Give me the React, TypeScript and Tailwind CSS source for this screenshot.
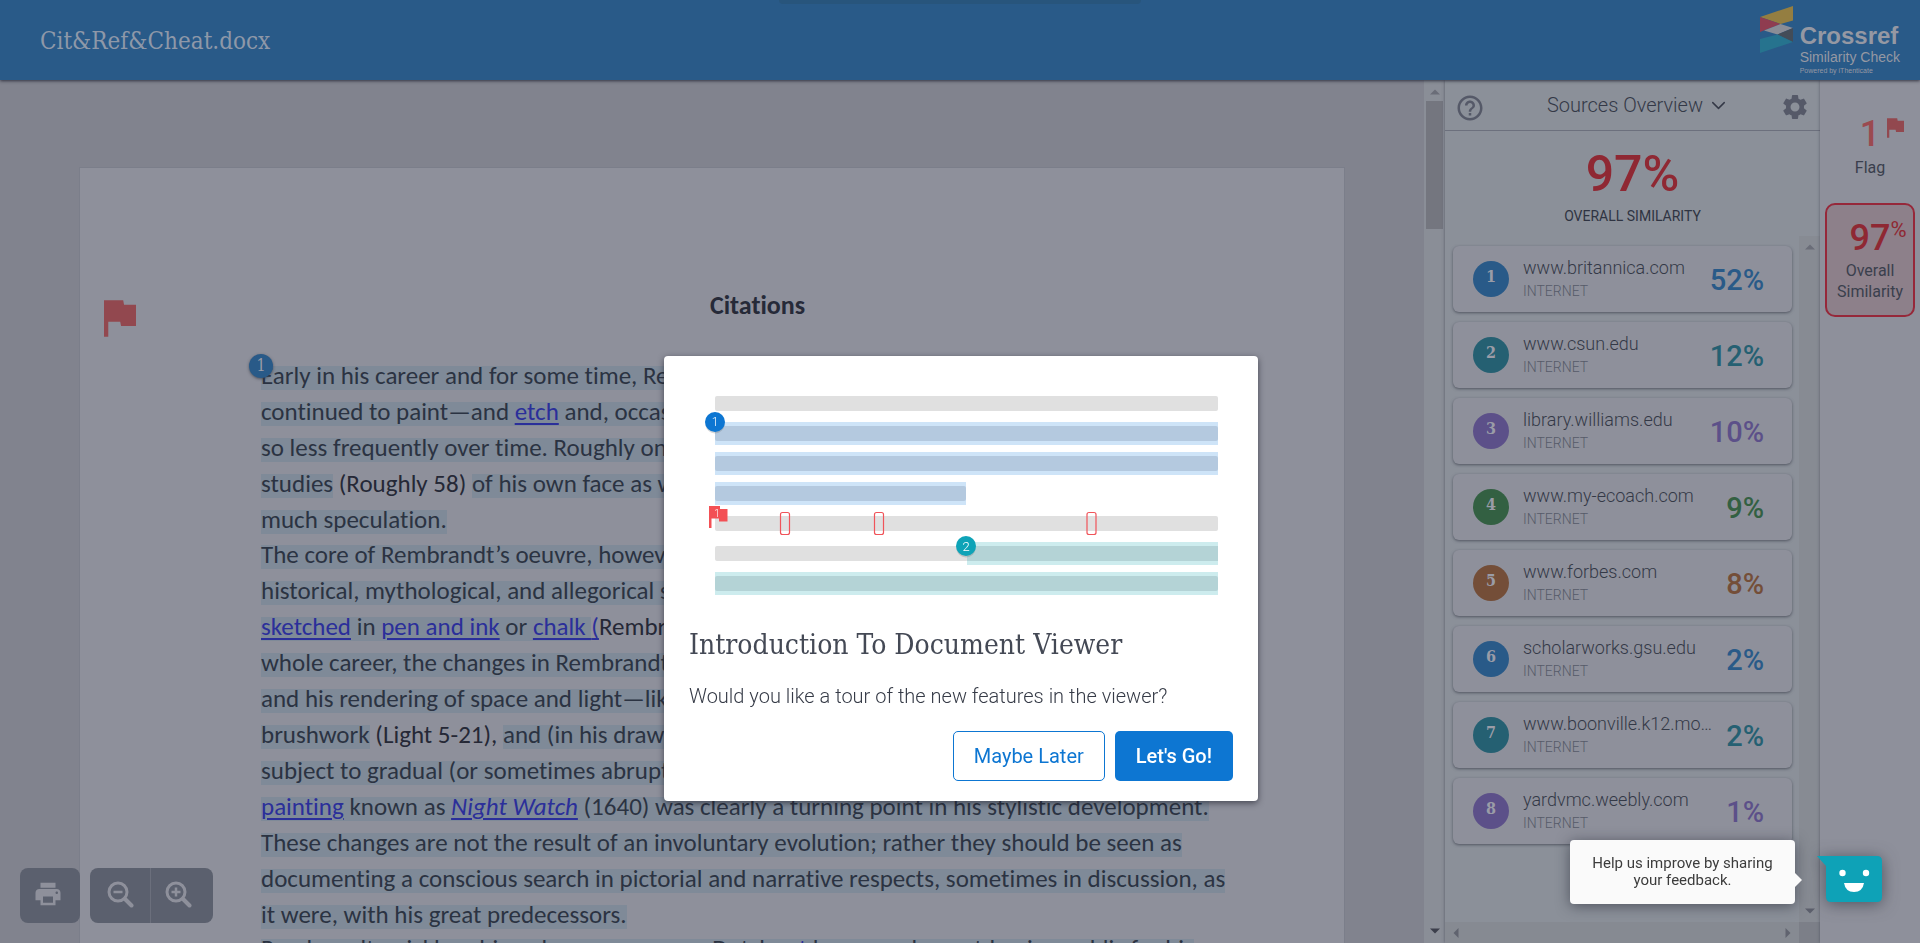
import React from "react";
import { MdHelpOutline, MdSettings, MdPrint } from "react-icons/md";
import { ChevronDown } from "lucide-react";

type Source = { name: string; pct: number; badge: string; text: string };

const sources: Source[] = [
  { name: "www.britannica.com", pct: 52, badge: "bg-[#295a88]", text: "text-[#295a88]" },
  { name: "www.csun.edu", pct: 12, badge: "bg-[#256072]", text: "text-[#256072]" },
  { name: "library.williams.edu", pct: 10, badge: "bg-[#5c5089]", text: "text-[#5c5089]" },
  { name: "www.my-ecoach.com", pct: 9, badge: "bg-[#336042]", text: "text-[#336042]" },
  { name: "www.forbes.com", pct: 8, badge: "bg-[#744e38]", text: "text-[#744e38]" },
  { name: "scholarworks.gsu.edu", pct: 2, badge: "bg-[#295a88]", text: "text-[#295a88]" },
  { name: "www.boonville.k12.mo.us", pct: 2, badge: "bg-[#256072]", text: "text-[#256072]" },
  { name: "yardvmc.weebly.com", pct: 1, badge: "bg-[#5c5089]", text: "text-[#5c5089]" },
];

function Match({ children }: { children: React.ReactNode }) {
  return <span className="inline-block bg-[#7f8a98] pb-[5px] leading-[19px]">{children}</span>;
}

function DocLink({ children, italic }: { children: React.ReactNode; italic?: boolean }) {
  return (
    <a
      href="#"
      className={
        italic
          ? "italic text-[#2b2f9a] underline decoration-2 underline-offset-[3px]"
          : "text-[#2b2f9a] underline decoration-2 underline-offset-[3px]"
      }
    >
      {children}
    </a>
  );
}

function Line({ children }: { children: React.ReactNode }) {
  return <span className="block h-9 whitespace-pre leading-9">{children}</span>;
}

function Flag({ className }: { className: string }) {
  return (
    <svg viewBox="5 4 15 17" className={className} aria-hidden="true">
      <path fill="currentColor" d="M14.4 6L14 4H5v17h2v-7h5.6l.4 2h7V6z" />
    </svg>
  );
}

function Arrow({ d, className }: { d: string; className: string }) {
  return (
    <svg viewBox="0 0 10 10" className={className} aria-hidden="true">
      <path d={d} fill="currentColor" />
    </svg>
  );
}

const UP = "M0 7.5L5 2.5L10 7.5Z";
const DOWN = "M0 2.5L5 7.5L10 2.5Z";
const LEFT = "M7.5 0L2.5 5L7.5 10Z";
const RIGHT = "M2.5 0L7.5 5L2.5 10Z";

function ZoomIcon({ plus }: { plus?: boolean }) {
  return (
    <svg viewBox="0 0 28 28" className="size-7" fill="none" stroke="#8e909b" aria-hidden="true">
      <circle cx="12" cy="12" r="9" strokeWidth="3" />
      <path d="M19 19L25.5 25.5" strokeWidth="4" strokeLinecap="round" />
      <path d={plus ? "M7.5 12H16.5M12 7.5V16.5" : "M7.5 12H16.5"} strokeWidth="2.5" />
    </svg>
  );
}

function Header() {
  return (
    <header className="relative z-10 flex h-20 shrink-0 items-start justify-between bg-[#295a88] pl-10 pr-5 shadow-[0_1px_3px_rgba(40,42,55,0.9)]">
      <div className="absolute left-1/2 top-0 h-1 w-[362px] -translate-x-1/2 rounded-b-lg bg-[#28557c]" />
      <h1 className="pt-[25px] font-['Roboto_Slab','DejaVu_Serif_Condensed',serif] text-2xl leading-8 text-[#8e98a8]">
        Cit&amp;Ref&amp;Cheat.docx
      </h1>
      <div className="flex items-start gap-[7px] pt-1.5">
        <svg viewBox="0 0 33 47" className="h-[47px] w-[33px]" aria-hidden="true">
          <path d="M0 11L33 0V14.5L20.5 18Z" fill="#947e41" />
          <path d="M0 11L20.5 18L0 26Z" fill="#8f3c50" />
          <path d="M20.5 18L33 22L17.5 28.5L4 24.6Z" fill="#8a8d96" />
          <path d="M33 22V36L17.5 28.5Z" fill="#434c58" />
          <path d="M0 33L17.5 28.5L33 36L0 47Z" fill="#26738e" />
        </svg>
        <div className="pt-[18px] font-['Liberation_Sans',sans-serif] text-[#9598a3]">
          <div className="text-2xl font-bold leading-6">Crossref</div>
          <div className="mt-0.5 text-sm leading-[14px]">Similarity Check</div>
          <div className="mt-[3px] text-[7px] leading-2">Powered by iThenticate</div>
        </div>
      </div>
    </header>
  );
}

function DocumentPage() {
  return (
    <article className="relative mx-[79px] mt-[87px] h-[1640px] max-w-[1267px] border border-[#7b7e8a] bg-[#8e909b] pl-[181px] pr-[90px] pt-[119px] font-['Carlito','Calibri','Open_Sans',sans-serif] text-[25px] text-[#2b3342] [font-variant-ligatures:none]">
      <Flag className="absolute left-6 top-[132px] h-[37px] w-8 text-[#92484f]" />
      <h2 className="text-center text-[26px] font-bold leading-9 text-[#262a38]">Citations</h2>
      <div className="relative mt-[35px]">
        <span className="absolute -left-3 -top-[4px] z-10 flex size-6 items-center justify-center rounded-full bg-[#295a88] font-['Roboto_Slab','DejaVu_Serif_Condensed',serif] text-base leading-none text-[#9a9ca7] shadow-[0_1px_3px_rgba(50,55,70,0.7)]">
          1
        </span>
        <p>
          <Line><Match>Early in his career and for some time, Rembrandt painted mainly portraits.</Match></Line>
          <Line><Match>continued to paint—and <DocLink>etch</DocLink> and, occasionally, draw—self-portraits</Match></Line>
          <Line><Match>so less frequently over time. Roughly one-tenth of his painted and etched</Match></Line>
          <Line><Match>studies</Match> <span className="text-[#252836]">(Roughly 58)</span> <Match>of his own face as well as more formal self-portraits</Match></Line>
          <Line><Match>much speculation.</Match></Line>
        </p>
        <p className="-mt-px">
          <Line><Match>The core of Rembrandt’s oeuvre, however, consists of portraits and of</Match></Line>
          <Line><Match>historical, mythological, and allegorical scenes, all of which he painted</Match></Line>
          <Line><Match><DocLink>sketched</DocLink> in <DocLink>pen and ink</DocLink> or <DocLink>chalk </DocLink></Match><DocLink>(</DocLink><span className="text-[#252836]">Rembrandt 17). Seen over his</span></Line>
          <Line><Match>whole career, the changes in Rembrandt’s style are remarkable. His</Match></Line>
          <Line><Match>and his rendering of space and light—like his handling of contour</Match></Line>
          <Line><Match>brushwork</Match> <span className="text-[#252836]">(Light 5-21),</span> <Match>and (in his drawings and etchings) his treatment</Match></Line>
          <Line><Match>subject to gradual (or sometimes abrupt) transformation, even within</Match></Line>
          <Line><Match><DocLink>painting</DocLink> known as <DocLink italic>Night Watch</DocLink> (1640) was clearly a turning point in his stylistic development.</Match></Line>
          <Line><Match>These changes are not the result of an involuntary evolution; rather they should be seen as</Match></Line>
          <Line><Match>documenting a conscious search in pictorial and narrative respects, sometimes in discussion, as</Match></Line>
          <Line><Match>it were, with his great predecessors.</Match></Line>
        </p>
        <p className="-mt-0.5">
          <Line><Match>Rembrandt quickly achieved renown among Dutch <DocLink>art</DocLink> lovers and an art-buying public for his</Match></Line>
        </p>
      </div>
    </article>
  );
}

function Viewer() {
  return (
    <main className="relative flex min-w-0 flex-1 bg-[#81838e]">
      <div className="min-w-0 flex-1 overflow-hidden">
        <DocumentPage />
      </div>
      <div className="flex w-[21px] flex-col items-center bg-[#8a8e97]">
        <Arrow d={UP} className="mt-[7px] size-2.5 text-[#6a6d78]" />
        <div className="mt-1 h-32 w-[17px] bg-[#74767f]" />
        <Arrow d={DOWN} className="mb-[7px] mt-auto size-2.5 text-[#3c3f4c]" />
      </div>
      <div className="absolute bottom-5 left-5 flex gap-2.5">
        <button type="button" aria-label="Print" className="flex h-[55px] w-[60px] items-center justify-center rounded-lg bg-[#5b606e] pb-1 pr-1 text-[#8e909b]">
          <MdPrint className="size-[30px]" />
        </button>
        <div className="flex h-[55px] divide-x divide-[#6b6f7c] overflow-hidden rounded-lg bg-[#5b606e]">
          <button type="button" aria-label="Zoom out" className="flex w-[61px] items-center justify-center pb-1">
            <ZoomIcon />
          </button>
          <button type="button" aria-label="Zoom in" className="flex w-[62px] items-center justify-center pb-1 pr-2">
            <ZoomIcon plus />
          </button>
        </div>
      </div>
    </main>
  );
}

function SourceCard({ source, index }: { source: Source; index: number }) {
  return (
    <li>
      <button
        type="button"
        className="flex h-[66px] w-full items-center rounded-md bg-[#8e909b] pl-5 pr-7 text-left shadow-[0_1px_3px_rgba(60,64,78,0.75)]"
      >
        <span className={`${source.badge} flex size-9 shrink-0 items-center justify-center rounded-full pb-1 font-['Roboto_Slab','DejaVu_Serif_Condensed',serif] text-base font-bold leading-none text-[#9a9ca7]`}>
          {index + 1}
        </span>
        <span className="ml-3.5 min-w-0 flex-1">
          <span className="block truncate text-lg font-light leading-6 text-[#343947]">{source.name}</span>
          <span className="block text-sm font-light leading-[22px] text-[#565b69]">INTERNET</span>
        </span>
        <span className={`${source.text} ml-3 pt-px text-[29px] font-medium leading-8`}>{source.pct}%</span>
      </button>
    </li>
  );
}

function Sidebar() {
  return (
    <aside className="z-[1] flex w-[375px] shrink-0 flex-col bg-[#8b9099] shadow-[0_0_3px_rgba(60,64,78,0.7)]">
      <div className="flex h-[51px] shrink-0 items-center justify-between border-b border-[#6c707d] px-2.5">
        <button type="button" aria-label="Help" className="pt-1.5 text-[#555968]">
          <MdHelpOutline className="size-[30px]" />
        </button>
        <button type="button" className="ml-3 flex items-center gap-1 text-xl font-light text-[#343947]">
          Sources Overview
          <ChevronDown className="size-[23px]" strokeWidth={1.5} />
        </button>
        <button type="button" aria-label="Settings" className="pt-1 text-[#555968]">
          <MdSettings className="size-[30px]" />
        </button>
      </div>
      <div className="flex h-[105px] shrink-0 flex-col items-center">
        <div className="mt-[17px] text-[50px] font-medium leading-[52px] text-[#8f2833]">97%</div>
        <div className="mt-1.5 text-sm leading-5 text-[#2f3442]">OVERALL SIMILARITY</div>
      </div>
      <div className="flex min-h-0 flex-1">
        <ul className="flex min-w-0 flex-1 flex-col gap-2.5 overflow-hidden pl-2 pr-[7px] pt-2.5">
          {sources.map((s, i) => (
            <SourceCard key={s.name} source={s} index={i} />
          ))}
        </ul>
        <div className="flex w-[21px] flex-col items-center justify-between bg-[#878b93] py-1.5">
          <Arrow d={UP} className="size-2.5 text-[#6a6d78]" />
          <Arrow d={DOWN} className="size-2.5 text-[#5c5f6c]" />
        </div>
      </div>
      <div className="flex h-[21px] shrink-0">
        <div className="flex flex-1 items-center justify-between bg-[#868a92] px-1.5">
          <Arrow d={LEFT} className="size-2.5 text-[#60636f]" />
          <Arrow d={RIGHT} className="size-2.5 text-[#60636f]" />
        </div>
        <div className="w-[21px] bg-[#7c7f88]" />
      </div>
    </aside>
  );
}

function Rail() {
  return (
    <nav className="z-[2] w-[100px] shrink-0 bg-[#8e909b] px-[5px] pt-8 text-[#343947] shadow-[0_0_3px_rgba(60,64,78,0.6)]">
      <button type="button" className="relative flex h-[70px] w-full flex-col items-center">
        <span className="text-4xl font-medium leading-[44px] text-[#9b4a50]">1</span>
        <Flag className="absolute right-[11px] top-1.5 h-5 w-[17px] text-[#92484f]" />
        <span className="mt-0.5 text-base leading-5 text-[#3a3f4d]">Flag</span>
      </button>
      <button
        type="button"
        className="mt-[21px] flex h-[114px] w-full flex-col items-center rounded-[10px] border-2 border-[#96283a] bg-[#8d808a] pt-[11px]"
      >
        <span className="flex items-start pl-4 text-[#8f2833]">
          <span className="text-4xl font-medium leading-[44px]">97</span>
          <span className="text-[22px] leading-7">%</span>
        </span>
        <span className="text-base leading-[21px] text-[#3a3f4d]">
          Overall
          <br />
          Similarity
        </span>
      </button>
    </nav>
  );
}

function Illustration() {
  return (
    <svg viewBox="0 0 594 260" className="w-full" role="img" aria-label="Highlighted matches in a document">
      <rect x="51" y="40" width="503" height="15" rx="2" fill="#e0e0e0" />
      <g>
        <path d="M51 66H554V89H51ZM51 96H554V119H51ZM51 126H302V149H51Z" fill="#cee4f8" />
        <rect x="51" y="70" width="503" height="15" rx="2" fill="#b4c9df" />
        <rect x="51" y="100" width="503" height="15" rx="2" fill="#b4c9df" />
        <rect x="51" y="130" width="251" height="15" rx="2" fill="#b4c9df" />
      </g>
      <rect x="51" y="160" width="503" height="15" rx="2" fill="#e0e0e0" />
      <rect x="51" y="190" width="253" height="15" rx="2" fill="#e0e0e0" />
      <path d="M303 186H554V209H303ZM51 216H554V239H51Z" fill="#cdecee" />
      <rect x="303" y="190" width="251" height="15" fill="#b4d3d6" />
      <rect x="51" y="220" width="503" height="15" rx="2" fill="#b4d3d6" />
      <g fill="none" stroke="#f0545a" strokeWidth="1.2">
        <rect x="116.5" y="156.5" width="9" height="22" rx="2" />
        <rect x="210.5" y="156.5" width="9" height="22" rx="2" />
        <rect x="423" y="156.5" width="9" height="22" rx="2" />
      </g>
      <path d="M45 150H56V153H63.5V165.5H55V162.5H47.5V172H45Z" fill="#f35055" />
      <ellipse cx="51" cy="68.500" rx="9.500" ry="9" fill="#555" opacity=".22" />
      <circle cx="51" cy="66" r="10" fill="#0d76d2" />
      <ellipse cx="302" cy="192.500" rx="9.500" ry="9" fill="#555" opacity=".22" />
      <circle cx="302" cy="190" r="10" fill="#0ea3b7" />
      <g fill="#fff" textAnchor="middle" fontFamily="Roboto, sans-serif">
        <text x="51" y="70" fontSize="12" fontWeight="300">1</text>
        <text x="302" y="194.500" fontSize="13" fontWeight="300">2</text>
        <text x="53" y="161" fontSize="10" fontWeight="300">1</text>
      </g>
    </svg>
  );
}

function IntroDialog() {
  return (
    <div className="fixed inset-0 z-20 grid place-items-center pl-0.5 pt-[213px]">
      <section
        role="dialog"
        aria-modal="true"
        aria-labelledby="intro-title"
        className="w-[594px] rounded bg-white shadow-[0_2px_6px_rgba(30,32,45,0.65)]"
      >
        <Illustration />
        <div className="px-[25px] pb-5">
          <h2 id="intro-title" className="mt-[11px] font-['Roboto_Slab','DejaVu_Serif_Condensed',serif] text-[28px] leading-9 text-[#444955]">
            Introduction To Document Viewer
          </h2>
          <p className="mt-[19px] text-xl font-light leading-7 text-[#363b47]">
            Would you like a tour of the new features in the viewer?
          </p>
          <div className="mt-[21px] flex justify-end gap-2.5">
            <button type="button" className="h-[50px] rounded-[5px] border border-[#0d76d2] px-5 text-xl text-[#0d76d2]">
              Maybe Later
            </button>
            <button type="button" className="h-[50px] rounded-[5px] bg-[#0d76d2] px-[21px] text-xl font-medium text-white">
              Let's Go!
            </button>
          </div>
        </div>
      </section>
    </div>
  );
}

function Feedback() {
  return (
    <div className="fixed bottom-[39px] right-[38px] z-30 flex items-center">
      <div className="relative w-[225px] rounded bg-[#fafafa] px-4 py-[15px] text-center text-[15px] leading-[17px] text-[#3c3c3c] shadow-[0_2px_14px_rgba(30,32,45,0.55)]">
        Help us improve by sharing your feedback.
        <svg viewBox="0 0 7 14" className="absolute -right-[7px] top-[33px] h-3.5 w-[7px]" aria-hidden="true">
          <path d="M0 0L7 7L0 14Z" fill="#fafafa" />
        </svg>
      </div>
      <button type="button" aria-label="Give feedback" className="ml-[22px] mt-3.5 drop-shadow-[0_2px_8px_rgba(30,32,45,0.55)]">
        <svg viewBox="0 0 65 46" className="block h-[46px] w-[65px]" aria-hidden="true">
          <path d="M0 0H60Q65 0 65 5V41Q65 46 60 46H14Q9 46 9 41V10Z" fill="#0ea2b7" />
          <circle cx="25.500" cy="17" r="3.200" fill="#fff" />
          <circle cx="49" cy="17" r="3.200" fill="#fff" />
          <path d="M27 27H47Q45.500 36 37 36Q28.500 36 27 27Z" fill="#fff" />
        </svg>
      </button>
    </div>
  );
}

export default function App() {
  return (
    <div className="flex h-screen flex-col overflow-hidden bg-[#81838e] font-['Roboto',sans-serif]">
      <Header />
      <div className="flex min-h-0 flex-1">
        <Viewer />
        <Sidebar />
        <Rail />
      </div>
      <IntroDialog />
      <Feedback />
    </div>
  );
}
